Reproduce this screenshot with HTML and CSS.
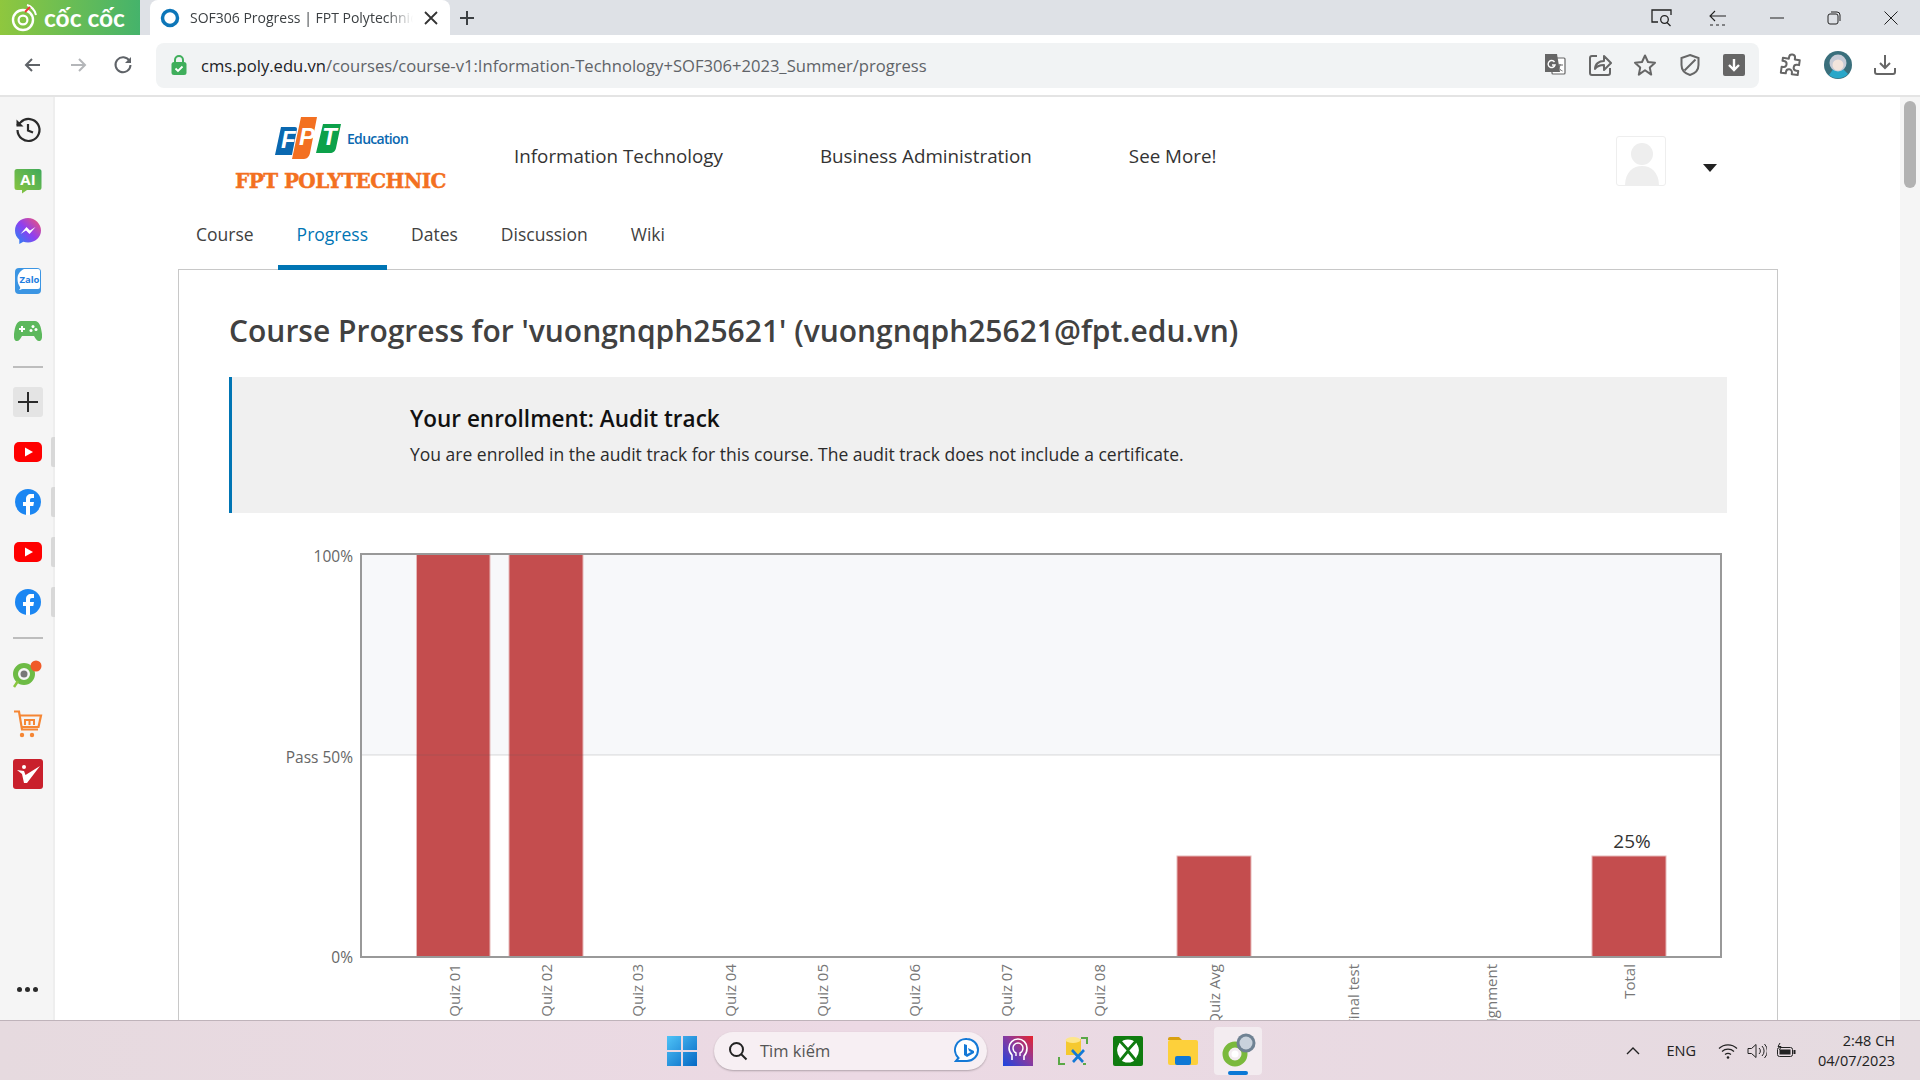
FILE: index.html
```html
<!DOCTYPE html>
<html lang="vi">
<head>
<meta charset="utf-8">
<title>SOF306 Progress | FPT Polytechnic</title>
<link rel="stylesheet" href="styles.css">
</head>
<body>
<div class="screen">
  <header class="tabstrip">
    <div class="brand">
      <svg class="brand-mark" viewBox="0 0 30 30" width="30" height="30"><circle cx="14" cy="17" r="10" fill="none" stroke="#fff" stroke-width="2.4"/><circle cx="14" cy="17" r="4.4" fill="none" stroke="#fff" stroke-width="2.2"/><path d="M18 2c4 1 8 5 9 10" fill="none" stroke="#fff" stroke-width="2"/><path d="M16 9l5-5" stroke="#e33" stroke-width="2"/></svg>
      <span class="brand-text">cốc cốc</span>
    </div>
    <div class="tab">
      <svg viewBox="0 0 20 20" width="20" height="20"><circle cx="10" cy="10" r="7.5" fill="none" stroke="#0d76b8" stroke-width="3.500"/></svg>
      <span class="tab-title">SOF306 Progress | FPT Polytechnic</span>
      <svg class="tab-close" viewBox="0 0 14 14" width="14" height="14"><path d="M1 1l12 12M13 1L1 13" stroke="#333" stroke-width="1.8"/></svg>
    </div>
    <svg class="newtab" viewBox="0 0 14 14" width="14" height="14"><path d="M7 0v14M0 7h14" stroke="#3c4043" stroke-width="2"/></svg>
    <div class="caption">
      <svg viewBox="0 0 22 18" width="22" height="18"><path d="M7 13H1V1h19v5M20 1v3" fill="none" stroke="#222" stroke-width="1.3"/><circle cx="13.500" cy="10.500" r="3.800" fill="none" stroke="#222" stroke-width="1.3"/><path d="M16 13.500l3.500 3.500" stroke="#222" stroke-width="1.3"/></svg>
      <svg viewBox="0 0 18 16" width="18" height="16"><path d="M6 1L1 6l5 5M1 6h16M1 15h3M7 15h3M13 15h3" fill="none" stroke="#222" stroke-width="1.1"/></svg>
      <svg viewBox="0 0 14 14" width="14" height="14"><path d="M0 7h14" stroke="#222" stroke-width="1"/></svg>
      <svg viewBox="0 0 14 14" width="14" height="14"><rect x="1" y="3" width="10" height="10" rx="2" fill="none" stroke="#222"/><path d="M4 1h6a3 3 0 0 1 3 3v6" fill="none" stroke="#222"/></svg>
      <svg viewBox="0 0 14 14" width="14" height="14"><path d="M0.500 0.500l13 13M13.500 0.500l-13 13" stroke="#222" stroke-width="1"/></svg>
    </div>
  </header>

  <div class="toolbar">
    <svg class="nav-btn" viewBox="0 0 20 20" width="20" height="20"><path d="M17 10H3M9 4l-6 6 6 6" fill="none" stroke="#5f6368" stroke-width="2"/></svg>
    <svg class="nav-btn" viewBox="0 0 20 20" width="20" height="20"><path d="M3 10h14M11 4l6 6-6 6" fill="none" stroke="#b4b6b9" stroke-width="2"/></svg>
    <svg class="nav-btn" viewBox="0 0 20 20" width="20" height="20"><path d="M16.500 6A7.500 7.500 0 1 0 17.500 10" fill="none" stroke="#5f6368" stroke-width="2"/><path d="M18 2v6h-6z" fill="#5f6368"/></svg>
    <div class="omnibox">
      <svg viewBox="0 0 18 22" width="18" height="22"><path d="M5 9V6a4 4 0 0 1 8 0v3" fill="none" stroke="#3fae5b" stroke-width="2"/><rect x="1.500" y="8" width="15" height="13" rx="2.500" fill="#3fae5b"/><path d="M5.500 14.500l2.500 2.500 4.500-4.500" fill="none" stroke="#fff" stroke-width="1.800"/></svg>
      <div class="url"><span class="url-host">cms.poly.edu.vn</span>/courses/course-v1:Information-Technology+SOF306+2023_Summer/progress</div>
      <div class="omni-actions">
        <svg viewBox="0 0 24 24" width="24" height="24"><rect x="9" y="5" width="13" height="16" rx="1" fill="#fff" stroke="#666" stroke-width="1.200"/><path d="M2 1h12l3 18H2z" fill="#666"/><path d="M11.500 9a3.500 3.500 0 1 0 .5 3H9" fill="none" stroke="#fff" stroke-width="1.400"/><path d="M14 12h6M17 11v1c-.5 3-2 5-3.500 6M15 14c1 2 3 3.500 4.500 4" fill="none" stroke="#666"/></svg>
        <svg viewBox="0 0 24 24" width="24" height="24"><path d="M9 3H4a2 2 0 0 0-2 2v15a2 2 0 0 0 2 2h16a2 2 0 0 0 2-2v-5" fill="none" stroke="#666" stroke-width="2"/><path d="M7 16c0-5 4-8 9-8V3l7 7-7 7v-5c-4 0-7 1-9 4z" fill="none" stroke="#666" stroke-width="2" stroke-linejoin="round"/></svg>
        <svg viewBox="0 0 24 24" width="24" height="24"><path d="M12 2.500l3 6.500 7 .8-5.200 4.800 1.400 7L12 17.200 5.800 21.600l1.400-7L2 9.800 9 9z" fill="none" stroke="#666" stroke-width="2" stroke-linejoin="round"/></svg>
        <svg viewBox="0 0 24 24" width="24" height="24"><path d="M12 2l8.500 3v7c0 5-3.500 8.500-8.500 10-5-1.500-8.500-5-8.500-10V5z" fill="none" stroke="#666" stroke-width="2"/><path d="M17.500 6.500L6.500 17.500" stroke="#666" stroke-width="2"/></svg>
        <svg viewBox="0 0 22 22" width="22" height="22"><rect width="22" height="22" rx="2" fill="#666"/><path d="M11 5v11M6 11l5 5 5-5" fill="none" stroke="#fff" stroke-width="2.400"/></svg>
      </div>
    </div>
    <div class="tool-actions">
      <svg viewBox="0 0 24 24" width="24" height="24"><path d="M9 4.500a3 3 0 0 1 6 0V6h5v5h-2a3 3 0 0 0 0 6h2v4h-6v-1.500a3 3 0 0 0-6 0V21H3v-6h1.500a3 3 0 0 0 0-6H3V6h6z" transform="rotate(8 12 12)" fill="none" stroke="#666" stroke-width="2" stroke-linejoin="round"/></svg>
      <svg class="profile" viewBox="0 0 28 28" width="28" height="28"><circle cx="14" cy="14" r="14" fill="#3a6f7c"/><path d="M5 24l5-7h8l6 6a14 14 0 0 1-19 1z" fill="#29a7c9"/><circle cx="14" cy="12" r="8.500" fill="#c7cbd6"/><circle cx="14" cy="14" r="5.500" fill="#f3e4dc"/></svg>
      <svg viewBox="0 0 24 24" width="24" height="24"><path d="M12 2v13M7 10l5 5 5-5" fill="none" stroke="#666" stroke-width="2"/><path d="M2 15v4a2 2 0 0 0 2 2h16a2 2 0 0 0 2-2v-4" fill="none" stroke="#666" stroke-width="2"/></svg>
    </div>
  </div>

  <div class="main">
    <aside class="sidebar">
      <div class="side-item side-first"><svg viewBox="0 0 28 28" width="28" height="28"><path d="M3.500 14a11 11 0 1 0 3.200-7.800L3 9.500" fill="none" stroke="#2a2a2a" stroke-width="2.200"/><path d="M2.500 3.500v7h7z" fill="#2a2a2a"/><path d="M14 8v6.500l5 2" fill="none" stroke="#2a2a2a" stroke-width="2.200"/></svg></div>
      <div class="side-item"><svg viewBox="0 0 28 26" width="28" height="26"><defs><linearGradient id="aig" x1="0" y1="1" x2="1" y2="0"><stop offset="0" stop-color="#8cc63f"/><stop offset="1" stop-color="#3fa95b"/></linearGradient></defs><path d="M3 1h22a2.500 2.500 0 0 1 2.500 2.500v16A2.500 2.500 0 0 1 25 22H13l-5 3.500V22H3A2.500 2.500 0 0 1 .5 19.500v-16A2.500 2.500 0 0 1 3 1z" fill="url(#aig)"/><text x="14" y="17" class="ai-text">AI</text></svg></div>
      <div class="side-item"><svg viewBox="0 0 26 26" width="26" height="26"><defs><linearGradient id="msg" x1="0" y1="1" x2="1" y2="0"><stop offset="0" stop-color="#1b8cf5"/><stop offset=".5" stop-color="#8f3ff0"/><stop offset="1" stop-color="#f7566d"/></linearGradient></defs><path d="M13 0C5.800 0 0 5.400 0 12.500c0 3.800 1.600 7 4.300 9.200V26l4-2.200c1.500.4 3 .7 4.700.7 7.200 0 13-5.400 13-12S20.200 0 13 0z" fill="url(#msg)"/><path d="M5.500 16l6-7 3.500 3.500L20.500 9l-6 7-3.500-3.500z" fill="#fff"/></svg></div>
      <div class="side-item"><svg viewBox="0 0 26 26" width="26" height="26"><rect width="26" height="26" rx="4" fill="#3b95e3"/><path d="M9 1h14a2 2 0 0 1 2 2v16a2 2 0 0 1-2 2H9c-2 0-3 .5-5 1 1-1 1.500-2 1-3C3.500 17 2.500 14 2.500 11 2.500 6 5 3 9 1z" fill="#fff"/><text x="14.500" y="15" class="zalo-text">Zalo</text></svg></div>
      <div class="side-item"><svg viewBox="0 0 28 22" width="28" height="22"><path d="M7 1h14c4 0 6 5 7 13 .5 5-1 7-3 7s-3-1.500-5-5H8c-2 3.500-3 5-5 5s-3.500-2-3-7C1 6 3 1 7 1z" fill="#5cb85c"/><path d="M5 9h6M8 6v6" stroke="#fff" stroke-width="2"/><circle cx="19" cy="6.500" r="1.500" fill="#fff"/><circle cx="22" cy="9.500" r="1.500" fill="#fff"/><circle cx="17" cy="10.500" r="1.500" fill="#fff"/></svg></div>
      <div class="side-divider"></div>
      <div class="side-item side-add"><svg viewBox="0 0 20 20" width="20" height="20"><path d="M10 0v20M0 10h20" stroke="#2a2a2a" stroke-width="2"/></svg></div>
      <div class="side-item pinned"><svg viewBox="0 0 28 20" width="28" height="20"><rect width="28" height="20" rx="5" fill="#f00"/><path d="M11 5.500l8 4.500-8 4.500z" fill="#fff"/></svg></div>
      <div class="side-item pinned"><svg viewBox="0 0 26 26" width="26" height="26"><circle cx="13" cy="13" r="13" fill="#1b86f2"/><path d="M11 26v-9H8v-4h3v-3c0-3 2-5 5-5h3v4h-2c-1.500 0-2 .8-2 2v2h4l-.7 4H15v9z" fill="#fff"/></svg></div>
      <div class="side-item pinned"><svg viewBox="0 0 28 20" width="28" height="20"><rect width="28" height="20" rx="5" fill="#f00"/><path d="M11 5.500l8 4.500-8 4.500z" fill="#fff"/></svg></div>
      <div class="side-item pinned"><svg viewBox="0 0 26 26" width="26" height="26"><circle cx="13" cy="13" r="13" fill="#1b86f2"/><path d="M11 26v-9H8v-4h3v-3c0-3 2-5 5-5h3v4h-2c-1.500 0-2 .8-2 2v2h4l-.7 4H15v9z" fill="#fff"/></svg></div>
      <div class="side-divider"></div>
      <div class="side-item"><svg viewBox="0 0 30 28" width="30" height="28"><circle cx="11" cy="14" r="8.500" fill="none" stroke="#6dbb45" stroke-width="5"/><circle cx="11" cy="14" r="3.500" fill="#777"/><path d="M5 21l-4 6" stroke="#8ac640" stroke-width="2.500"/><circle cx="23" cy="6" r="5.500" fill="#f05a28"/></svg></div>
      <div class="side-item"><svg viewBox="0 0 30 28" width="30" height="28"><path d="M1 1.500h5l3 18h16" fill="none" stroke="#f58634" stroke-width="2.200"/><path d="M6.500 5.500H28L25.500 17H9" fill="none" stroke="#f58634" stroke-width="2.200"/><path d="M12 15v-5h9v5M16.500 10v5" fill="none" stroke="#f58634" stroke-width="2"/><circle cx="9" cy="25" r="2.200" fill="#f58634"/><circle cx="19" cy="25" r="2.200" fill="#f58634"/></svg></div>
      <div class="side-item"><svg viewBox="0 0 30 30" width="30" height="30"><rect width="30" height="30" rx="3" fill="#c9202c"/><circle cx="11" cy="8" r="2" fill="#fff"/><path d="M4 11l7 1 1.500 4L27 7 14 24h-3L9 15z" fill="#fff"/></svg></div>
      <div class="side-spacer"></div>
      <div class="side-more"><span></span><span></span><span></span></div>
    </aside>

    <div class="page">
      <div class="site-header">
        <div class="logo">
          <div class="logo-top">
            <svg class="fpt" viewBox="0 0 66 42" width="66" height="42">
              <path d="M6 10h14a2 2 0 0 1 2 2l-5 26H0z" fill="#0a68b0"/>
              <path d="M26 0h16l-7 36c-.5 3-3 6-6 6H17z" fill="#f37021"/>
              <path d="M48 7h18l-5 24c-.5 3-3 5-6 5H41z" fill="#0ca14a"/>
              <text x="6" y="31" class="fpt-letter">F</text>
              <text x="24" y="28" class="fpt-letter">P</text>
              <text x="47" y="28" class="fpt-letter">T</text>
            </svg>
            <span class="logo-edu">Education</span>
          </div>
          <div class="logo-name">FPT POLYTECHNIC</div>
        </div>
        <nav class="site-nav">
          <a>Information Technology</a>
          <a>Business Administration</a>
          <a>See More!</a>
        </nav>
        <div class="user">
          <div class="user-photo"><svg viewBox="0 0 48 48" width="48" height="48"><circle cx="24" cy="16" r="11" fill="#eeeeee"/><path d="M7 48c0-14 8-20 17-20s17 6 17 20z" fill="#eeeeee"/></svg></div>
          <svg class="user-caret" viewBox="0 0 14 8" width="14" height="8"><path d="M0 0h14L7 8z" fill="#222"/></svg>
        </div>
      </div>

      <div class="course-tabs">
        <a>Course</a>
        <a class="active">Progress</a>
        <a>Dates</a>
        <a>Discussion</a>
        <a>Wiki</a>
      </div>

      <section class="card">
        <h1>Course Progress for 'vuongnqph25621' (vuongnqph25621@fpt.edu.vn)</h1>
        <div class="notice">
          <h2>Your enrollment: Audit track</h2>
          <p>You are enrolled in the audit track for this course. The audit track does not include a certificate.</p>
        </div>
        <svg class="chart" viewBox="0 0 1498 520" width="1498" height="520">
          <rect x="132" y="40" width="1360" height="201" fill="#f7f8fa"/>
          <rect class="bar" x="187.500" y="40" width="73.500" height="403"/>
          <rect class="bar" x="280" y="40" width="74" height="403"/>
          <rect class="bar" x="948" y="342" width="74" height="101"/>
          <rect class="bar" x="1363" y="342" width="74" height="101"/>
          <path class="pass-line" d="M132 241H1492"/>
          <rect x="132" y="40" width="1360" height="403" fill="none" stroke="#999" stroke-width="2"/>
          <text class="y-label" x="124" y="48">100%</text>
          <text class="y-label" x="124" y="249">Pass 50%</text>
          <text class="y-label" x="124" y="449">0%</text>
          <text class="bar-value" x="1403" y="334">25%</text>
          <text class="x-label" transform="translate(231 450) rotate(-90)">Quiz 01</text>
          <text class="x-label" transform="translate(323 450) rotate(-90)">Quiz 02</text>
          <text class="x-label" transform="translate(414 450) rotate(-90)">Quiz 03</text>
          <text class="x-label" transform="translate(507 450) rotate(-90)">Quiz 04</text>
          <text class="x-label" transform="translate(599 450) rotate(-90)">Quiz 05</text>
          <text class="x-label" transform="translate(691 450) rotate(-90)">Quiz 06</text>
          <text class="x-label" transform="translate(783 450) rotate(-90)">Quiz 07</text>
          <text class="x-label" transform="translate(876 450) rotate(-90)">Quiz 08</text>
          <text class="x-label" transform="translate(991 450) rotate(-90)">Quiz Avg</text>
          <text class="x-label" transform="translate(1130 450) rotate(-90)">Final test</text>
          <text class="x-label" transform="translate(1268 450) rotate(-90)">Assignment</text>
          <text class="x-label" transform="translate(1406 450) rotate(-90)">Total</text>
        </svg>
      </section>
    </div>

    <div class="scrollbar"><div class="thumb"></div></div>
  </div>

  <footer class="taskbar">
    <div class="task-center">
      <svg class="win" viewBox="0 0 30 30" width="30" height="30"><defs><linearGradient id="win" x1="0" y1="0" x2="1" y2="1"><stop offset="0" stop-color="#4fc3f7"/><stop offset="1" stop-color="#0568c4"/></linearGradient></defs><path d="M0 0h14v14H0zM16 0h14v14H16zM0 16h14v14H0zM16 16h14v14H16z" fill="url(#win)"/></svg>
      <div class="search">
        <svg viewBox="0 0 20 20" width="20" height="20"><circle cx="8.500" cy="8.500" r="6.500" fill="none" stroke="#222" stroke-width="2"/><path d="M13 13l5.500 5.500" stroke="#222" stroke-width="2"/></svg>
        <span class="search-text">Tìm kiếm</span>
        <svg class="bing" viewBox="0 0 26 28" width="26" height="28"><path d="M13 2a11 11 0 0 1 11 11c0 6-5 11-11 11H2l2.500-3A11 11 0 0 1 13 2z" fill="#fff" stroke="#1479d6" stroke-width="2"/><path d="M10 7l3 1v9l4-2-2-1-1-3 6 3v2l-7 4-3-2z" fill="#1479d6"/></svg>
      </div>
      <div class="task-apps">
        <svg viewBox="0 0 30 30" width="30" height="30"><defs><linearGradient id="cl" x1="0" y1="1" x2="1" y2="0"><stop offset="0" stop-color="#1a44e0"/><stop offset=".55" stop-color="#8d3a9c"/><stop offset="1" stop-color="#e8232c"/></linearGradient></defs><rect width="30" height="30" fill="url(#cl)"/><path d="M9 24v-5c-2-2-3-4-3-7a9 9 0 0 1 18 0c0 5-2 7-3 8v4" fill="none" stroke="#fff" stroke-width="1.600"/><path d="M13 20v-3c-2-1-3-3-3-5a5 5 0 0 1 10 0c0 2-1 4-3 5v3" fill="none" stroke="#fff" stroke-width="1.400"/></svg>
        <svg viewBox="0 0 30 30" width="30" height="30"><path d="M8 3h15v16H8z" fill="#f5c92f"/><ellipse cx="15" cy="4" rx="7.500" ry="3" fill="#fde68a"/><path d="M23 2h6v6M1 21v7h6M25 28h3" fill="none" stroke="#5aa846" stroke-width="2"/><path d="M14 14l11 12M26 14L15 26" stroke="#1479d6" stroke-width="2.600"/></svg>
        <svg viewBox="0 0 30 30" width="30" height="30"><rect width="30" height="30" rx="2" fill="#107c10"/><circle cx="15" cy="15" r="11.500" fill="#fff"/><path d="M6.500 4.500L15 14 23.500 4.500M6 26l9-11 9 11M5 7c-4 6-2 12 1 16M25 7c4 6 2 12-1 16" fill="none" stroke="#107c10" stroke-width="2.800"/></svg>
        <svg viewBox="0 0 30 30" width="30" height="30"><path d="M0 3a2 2 0 0 1 2-2h9l3 3h-14z" fill="#d9a00f"/><rect y="4" width="30" height="25" rx="2" fill="#fdd03b"/><rect x="7" y="20" width="16" height="9" rx="2" fill="#0e78d5"/></svg>
      </div>
      <div class="task-active">
        <svg viewBox="0 0 36 36" width="36" height="36"><circle cx="15" cy="21" r="9.500" fill="none" stroke="#7ab93c" stroke-width="6"/><circle cx="15" cy="21" r="3.500" fill="#fff"/><circle cx="26" cy="10" r="9.500" fill="#6f8293"/><circle cx="26" cy="10" r="6.500" fill="#c9d2dc"/></svg>
        <span class="task-indicator"></span>
      </div>
    </div>
    <div class="tray">
      <svg viewBox="0 0 14 8" width="14" height="8"><path d="M1 7l6-6 6 6" fill="none" stroke="#222" stroke-width="1.400"/></svg>
      <span class="tray-lang">ENG</span>
      <svg viewBox="0 0 20 16" width="20" height="16"><path d="M1 5.500a13 13 0 0 1 18 0M4 8.500a9 9 0 0 1 12 0M7 11.500a5 5 0 0 1 6 0" fill="none" stroke="#222" stroke-width="1.200"/><circle cx="10" cy="14.500" r="1.300" fill="#222"/></svg>
      <svg viewBox="0 0 20 16" width="20" height="16"><path d="M1 5.500h3.500L9 1.500v13l-4.500-4H1z" fill="none" stroke="#222"/><path d="M12 5a4 4 0 0 1 0 6M15 3a7 7 0 0 1 0 10M17.500 1a10 10 0 0 1 0 14" fill="none" stroke="#222"/></svg>
      <svg viewBox="0 0 20 16" width="20" height="16"><rect x="1.500" y="4.500" width="15" height="9" rx="2" fill="none" stroke="#222"/><rect x="3.500" y="6.500" width="11" height="5" fill="#222"/><rect x="17.500" y="7" width="2" height="4" fill="#222"/><path d="M4 0L2 3.500h3L3.500 7" fill="none" stroke="#222"/></svg>
      <div class="clock"><span>2:48 CH</span><span>04/07/2023</span></div>
    </div>
  </footer>
</div>
</body>
</html>
```

FILE: styles.css
```css
* { box-sizing: border-box; }
html, body { margin: 0; padding: 0; height: 100%; overflow: hidden; }
body { font-family: "Open Sans", sans-serif; color: #333; background: #fff; }
svg { display: block; flex: none; }

.screen { width: 1920px; height: 1080px; display: flex; flex-direction: column; overflow: hidden; }

/* window tab strip */
.tabstrip { height: 35px; flex: none; display: flex; align-items: stretch; background: #dee1e6; }
.brand { width: 140px; display: flex; align-items: center; gap: 5px; padding-left: 9px; color: #fff; background: linear-gradient(90deg, #8fc73e, #45b36b); }
.brand-text { font-family: Lato, sans-serif; font-weight: 700; font-size: 24.5px; line-height: 35px; white-space: nowrap; }
.tab { width: 300px; margin-left: 10px; display: flex; align-items: center; padding: 0 12px 0 10px; gap: 10px; background: #fff; border-radius: 8px 8px 0 0; }
.tab-title { width: 224px; font-size: 14px; color: #3c4043; white-space: nowrap; overflow: hidden; -webkit-mask-image: linear-gradient(90deg, #000 88%, transparent); mask-image: linear-gradient(90deg, #000 88%, transparent); }
.tab-close { margin-left: 1px; }
.newtab { align-self: center; margin-left: 10px; }
.caption { margin-left: auto; display: flex; align-items: center; padding-right: 22px; gap: 43px; }
.caption svg:first-child { margin-right: -7px; }

/* toolbar */
.toolbar { height: 62px; flex: none; display: flex; align-items: center; padding: 0 0 0 23px; background: #fff; border-bottom: 2px solid #e4e4e4; }
.nav-btn { margin-right: 25px; }
.toolbar .nav-btn:nth-child(3) { margin-right: 23px; }
.omnibox { width: 1603px; height: 45px; display: flex; align-items: center; padding: 0 14px 0 14px; gap: 13px; background: #f1f3f4; border-radius: 8px; }
.url { font-size: 16.6px; color: #5f6368; white-space: nowrap; }
.url-host { color: #202124; }
.omni-actions { margin-left: auto; display: flex; align-items: center; gap: 21px; }
.tool-actions { display: flex; align-items: center; margin-left: 20px; gap: 21px; }

/* main */
.main { flex: 1; min-height: 0; display: flex; }
.sidebar { width: 55px; flex: none; display: flex; flex-direction: column; align-items: center; background: #f5f5f5; box-shadow: inset -2px 0 0 #eeeeee; padding: 7px 0 0 0; }
.side-item { position: relative; width: 55px; height: 50px; flex: none; display: flex; align-items: center; justify-content: center; }
.side-first { height: 52px; }
.side-add { width: 30px; height: 30px; margin: 9px 0 10px; border-radius: 3px; background: #e4e4e4; }
.pinned::after { content: ""; position: absolute; right: 0; top: 10px; width: 4px; height: 30px; background: #d8d8d8; border-radius: 2px 0 0 2px; }
.side-divider { width: 30px; height: 2px; margin: 10px 0; background: #bdbdbd; flex: none; }
.side-spacer { flex: 1; }
.side-more { display: flex; gap: 3px; padding-bottom: 28px; }
.side-more span { width: 5px; height: 5px; border-radius: 50%; background: #2a2a2a; }
.ai-text { font: 700 15px "Open Sans", sans-serif; fill: #fff; text-anchor: middle; }
.zalo-text { font: 700 9.5px "Open Sans", sans-serif; fill: #1f7de0; text-anchor: middle; }

/* page */
.page { flex: 1; min-width: 0; overflow: hidden; padding-left: 123px; background: #fff; }
.site-header { height: 118px; display: flex; width: 1600px; }
.logo { width: 282px; padding: 19px 0 0 57px; flex: none; }
.logo-top { display: flex; align-items: flex-end; gap: 6px; margin-left: 40px; height: 43px; }
.logo-edu { font-size: 14px; font-weight: 600; color: #0a68b0; letter-spacing: -.7px; line-height: 18px; padding-bottom: 11px; white-space: nowrap; }
.logo-name { margin-top: 11px; font-family: "DejaVu Serif", serif; font-weight: 700; font-size: 20px; line-height: 22px; color: #f37021; white-space: nowrap; letter-spacing: -.55px; -webkit-text-stroke: .4px #f37021; }
.fpt-letter { font: italic 700 24px "Liberation Sans", sans-serif; fill: #fff; }
.site-nav { display: flex; gap: 97px; padding: 43px 0 0 54px; font-size: 18.8px; line-height: 32px; color: #333; white-space: nowrap; }
.user { margin-left: auto; display: flex; padding: 39px 0 0 0; margin-right: 61px; gap: 37px; }
.user-photo { width: 50px; height: 50px; padding: 1px; border: 1px solid #eeeeee; border-radius: 3px; overflow: hidden; }
.user-caret { margin-top: 28px; }
.course-tabs { height: 55px; display: flex; gap: 5px; width: 1600px; margin-left: -1px; position: relative; z-index: 1; margin-bottom: -1px; }
.course-tabs a { display: block; height: 55px; padding: 0 19px; font-size: 17.5px; line-height: 38px; color: #414141; }
.course-tabs a.active { color: #0075b4; border-bottom: 5px solid #0075b4; }
.card { width: 1600px; height: 900px; padding: 41px 41px 0 50px; border: 1px solid #c8c8c8; background: #fff; }
.card h1 { margin: 0; font-size: 30px; line-height: 40px; font-weight: 600; color: #414141; white-space: nowrap; }
.notice { width: 1498px; height: 136px; margin-top: 26px; padding: 26px 0 0 178px; background: #f0f0f0; border-left: 3px solid #0075b4; }
.notice h2 { margin: 0; font-size: 22.5px; line-height: 32px; font-weight: 600; color: #111; }
.notice p { margin: 6px 0 0; font-size: 17.5px; line-height: 26px; color: #2b2b2b; }
.chart { margin-top: 1px; overflow: visible; }
.bar { fill: #c44d4e; stroke: #e6b8b8; stroke-width: 1; }
.pass-line { stroke: rgba(90, 90, 90, .22); stroke-width: 1; }
.y-label { font: 15.5px "Open Sans", sans-serif; fill: #666; text-anchor: end; }
.x-label { font: 15px "Open Sans", sans-serif; fill: #777; text-anchor: end; }
.bar-value { font: 19px "Open Sans", sans-serif; fill: #333; text-anchor: middle; }

.scrollbar { width: 20px; flex: none; padding: 4px; background: #f5f5f5; }
.thumb { height: 87px; border-radius: 6px; background: #b2b2b2; }

/* taskbar */
.taskbar { height: 60px; flex: none; position: relative; display: flex; align-items: center; border-top: 1px solid #bfb3ba; background: linear-gradient(90deg, #e6dadf, #ecd9e4 45%, #e5dbe0); }
.task-center { display: flex; align-items: center; padding-left: 667px; }
.search { width: 273px; height: 38px; margin-left: 17px; display: flex; align-items: center; padding: 0 7px 0 14px; gap: 12px; border-radius: 19px; background: #f7eff3; box-shadow: 0 1px 2px rgba(0,0,0,.25); }
.search-text { font-size: 16.5px; color: #555; }
.bing { margin-left: auto; }
.task-apps { display: flex; align-items: center; margin-left: 16px; gap: 25px; }
.task-active { position: relative; width: 48px; height: 48px; margin-left: 16px; border-radius: 4px; background: #f3ecf0; padding: 6px; }
.task-indicator { position: absolute; left: 14px; bottom: 0; width: 20px; height: 4px; border-radius: 2px; background: #0a78d6; }
.tray { margin-left: auto; display: flex; align-items: center; padding-right: 25px; gap: 9px; }
.tray > svg:first-child { margin-right: 18px; }
.tray-lang { font-size: 14.5px; color: #222; margin-right: 13px; }
.clock { display: flex; flex-direction: column; align-items: flex-end; margin-left: 13px; font-size: 14.5px; line-height: 20px; color: #222; }
```
